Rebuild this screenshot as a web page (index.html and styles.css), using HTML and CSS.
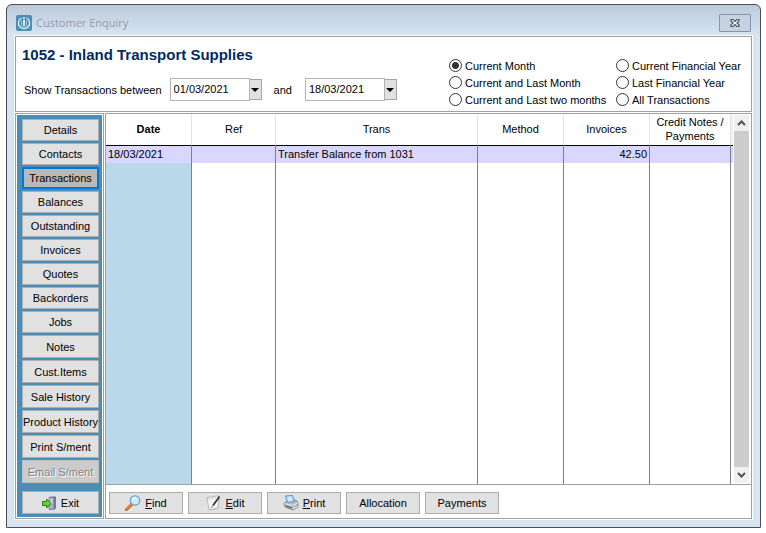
FILE: index.html
```html
<!DOCTYPE html>
<html lang="en">
  <head>
    <meta charset="UTF-8" />
    <meta name="viewport" content="width=device-width, initial-scale=1.0" />
    <title>Customer Enquiry</title>
    <link rel="stylesheet" href="styles.css">
  </head>
  <body>
    <div class="window">
      <!-- Title bar -->
      <header class="titlebar">
        <svg class="app-icon" width="16" height="16" viewBox="0 0 16 16">
          <rect width="16" height="16" rx="2" fill="#4a8db7" />
          <path d="M5.500 3a5.600 5.600 0 1 0 5 0" fill="none" stroke="#e6f1f8" stroke-width="1.300" />
          <path d="M5.500 5.500v3.700a2.500 2.500 0 0 0 5 0V5.500" fill="none" stroke="#a9cbe0" stroke-width="1" />
          <path d="M8 2.200v1.600M8 4.800v5.700" stroke="#fff" stroke-width="1.700" />
        </svg>
        <span class="title">Customer Enquiry</span>
        <button class="close" type="button" aria-label="Close">
          <svg width="12" height="10" viewBox="0 0 12 10">
            <path d="M2 1.500h2l2 2 2-2h2v1.500L8 5l2 2v1.500H8l-2-2-2 2H2V7l2-2-2-2z" fill="#fff" stroke="#4a4f5c" stroke-width="1.200" />
          </svg>
        </button>
      </header>

      <div class="client">
        <!-- Customer and date range -->
        <form class="panel filter">
          <div class="customer">
            <h1>1052 - Inland Transport Supplies</h1>
            <div class="range">
              <label for="from">Show Transactions between</label>
              <span class="date">
                <input type="text" id="from" value="01/03/2021" />
                <button type="button" aria-label="Pick start date"></button>
              </span>
              <label class="and" for="to">and</label>
              <span class="date">
                <input type="text" id="to" value="18/03/2021" />
                <button type="button" aria-label="Pick end date"></button>
              </span>
            </div>
          </div>
          <div class="periods">
            <label><input type="radio" name="period" checked />Current Month</label>
            <label><input type="radio" name="period" />Current Financial Year</label>
            <label><input type="radio" name="period" />Current and Last Month</label>
            <label><input type="radio" name="period" />Last Financial Year</label>
            <label><input type="radio" name="period" />Current and Last two months</label>
            <label><input type="radio" name="period" />All Transactions</label>
          </div>
        </form>

        <div class="lower">
          <!-- Side menu -->
          <nav class="panel side">
            <div class="menu">
              <button class="btn" type="button">Details</button>
              <button class="btn" type="button">Contacts</button>
              <button class="btn active" type="button">Transactions</button>
              <button class="btn" type="button">Balances</button>
              <button class="btn" type="button">Outstanding</button>
              <button class="btn" type="button">Invoices</button>
              <button class="btn" type="button">Quotes</button>
              <button class="btn" type="button">Backorders</button>
              <button class="btn" type="button">Jobs</button>
              <button class="btn tall" type="button">Notes</button>
              <button class="btn tall" type="button">Cust.Items</button>
              <button class="btn tall" type="button">Sale History</button>
              <button class="btn tall" type="button">Product History</button>
              <button class="btn tall" type="button">Print S/ment</button>
              <button class="btn tall" type="button" disabled>Email S/ment</button>
              <button class="btn tall exit" type="button">
                <svg width="15" height="14" viewBox="0 0 15 14">
                  <path d="M7 1.5L9 .5h5v12l-2 1H7z" fill="#7777a5" />
                  <path d="M7 1.5h5v12H7z" fill="#a9a9cc" stroke="#66668f" stroke-width=".6" />
                  <path d="M8 3h3M8 5h3M8 7h3" stroke="#dedeef" />
                  <path d="M.5 5.500h4V3l4.500 4.500L4.500 12V9.500h-4z" fill="#5fd42c" stroke="#23821a" />
                </svg>
                Exit
              </button>
            </div>
          </nav>

          <!-- Transaction list -->
          <main class="panel content">
            <div class="grid">
              <table>
                <colgroup>
                  <col class="col-date" />
                  <col class="col-ref" />
                  <col />
                  <col class="col-amount" />
                  <col class="col-amount" />
                  <col class="col-credit" />
                  <col class="col-edge" />
                </colgroup>
                <thead>
                  <tr>
                    <th class="sorted">Date</th>
                    <th>Ref</th>
                    <th>Trans</th>
                    <th>Method</th>
                    <th>Invoices</th>
                    <th>Credit Notes / Payments</th>
                    <th class="edge"></th>
                  </tr>
                </thead>
                <tbody>
                  <tr class="selected">
                    <td>18/03/2021</td>
                    <td></td>
                    <td>Transfer Balance from 1031</td>
                    <td></td>
                    <td class="num">42.50</td>
                    <td></td>
                    <td class="edge"></td>
                  </tr>
                  <tr class="blank">
                    <td></td>
                    <td></td>
                    <td></td>
                    <td></td>
                    <td></td>
                    <td></td>
                    <td class="edge"></td>
                  </tr>
                </tbody>
              </table>
              <div class="scrollbar">
                <button type="button" aria-label="Scroll up">
                  <svg width="9" height="6" viewBox="0 0 9 6"><path d="M1 5l3.500-3.500L8 5" /></svg>
                </button>
                <div class="thumb"></div>
                <button type="button" aria-label="Scroll down">
                  <svg width="9" height="6" viewBox="0 0 9 6"><path d="M1 1l3.500 3.500L8 1" /></svg>
                </button>
              </div>
            </div>

            <div class="actions">
              <button class="btn" type="button">
                <svg width="16" height="16" viewBox="0 0 16 16">
                  <path d="M1.500 14.500L7 9" stroke="#b5582a" stroke-width="3" stroke-linecap="round" />
                  <path d="M1.500 14L6.500 9" stroke="#f2914f" stroke-width="1.500" stroke-linecap="round" />
                  <circle cx="10" cy="5.500" r="4.700" fill="#c9edfb" stroke="#6e9fd8" stroke-width="1.300" />
                  <path d="M7.500 5a3 3 0 0 1 3-2.500" fill="none" stroke="#fff" stroke-width="1.500" />
                </svg>
                <span><u>F</u>ind</span>
              </button>
              <button class="btn" type="button">
                <svg width="16" height="16" viewBox="0 0 16 16">
                  <path d="M1 2.500l10-1.500 2 1-1 11-9 2z" fill="#f7f7f7" stroke="#a9a9a9" stroke-width=".8" />
                  <path d="M3.500 15l8.500-1.500L13 4" fill="none" stroke="#bdbdbd" />
                  <path d="M2.500 3.500l1.500 1M5.500 3l1.500 1M8.500 2.500l1 1" stroke="#aaa" />
                  <path d="M13.500 1.500L7 10.500" stroke="#333" stroke-width="1.800" />
                  <path d="M7 10.500l-2 2.500" stroke="#777" />
                </svg>
                <span><u>E</u>dit</span>
              </button>
              <button class="btn" type="button">
                <svg width="16" height="16" viewBox="0 0 16 16">
                  <path d="M1 8l4-2 8-1 2 3v4l-5 3-8-3z" fill="#b5b8be" stroke="#74777e" stroke-width=".8" />
                  <path d="M2.500 1l7-.5 2 6-7 1z" fill="#b9d9fa" stroke="#5a93de" stroke-width="1" />
                  <path d="M4.500 2.800l4-.3M5 4.800l4-.4" stroke="#fff" />
                  <path d="M1.500 8.500l8 2L14.500 8" fill="none" stroke="#eee" />
                  <path d="M3 11l6 2" stroke="#555" stroke-width="1.200" />
                  <path d="M10 14l4.500-2.500" stroke="#efefef" />
                </svg>
                <span><u>P</u>rint</span>
              </button>
              <button class="btn" type="button">Allocation</button>
              <button class="btn" type="button">Payments</button>
            </div>
          </main>
        </div>
      </div>
    </div>
  </body>
</html>
```

FILE: styles.css
```css
* {
  box-sizing: border-box;
}
body {
  display: flex;
  height: 100vh;
  margin: 0;
  padding: 4px 5px 5px 6px;
  background-color: #fff;
  color: #000;
  font-family: "Liberation Sans", Arial, sans-serif;
  font-size: 11px;
  line-height: 14px;
}
button,
input {
  margin: 0;
  font: inherit;
  color: inherit;
}
.window {
  display: flex;
  flex: 1;
  flex-direction: column;
  padding: 0 7px 7px;
  border: 1px solid #4b4d52;
  border-radius: 6px 6px 0 0;
  background: #d7e4f2 linear-gradient(#bccad9, #d7e4f2) no-repeat;
  background-size: 100% 30px;
}

/* title bar */
.titlebar {
  display: flex;
  align-items: center;
  height: 30px;
  padding: 6px 2px 0;
}
.title {
  flex: 1;
  margin-left: 4px;
  color: #949ba4;
  font-family: "Open Sans", "Noto Sans", sans-serif;
}
.close {
  display: flex;
  align-items: center;
  justify-content: center;
  width: 32px;
  height: 18px;
  padding: 0;
  border: 1px solid #8793b5;
  border-radius: 1px;
  background: #c6d2e2;
}

/* panels */
.client {
  display: flex;
  flex: 1;
  flex-direction: column;
  gap: 1px;
  padding: 1px;
  background-color: #fff;
}
.panel {
  border: 1px solid #a0a0a0;
  background-color: #fff;
}
.lower {
  display: flex;
  flex: 1;
  gap: 1px;
}

/* customer and date range */
.filter {
  display: flex;
  justify-content: space-between;
  height: 76px;
}
.customer {
  padding: 9px 0 0 6px;
}
h1 {
  margin: 0;
  color: #002b64;
  font-size: 15px;
  line-height: 18px;
}
.range {
  display: flex;
  align-items: center;
  margin-top: 14px;
  padding-left: 2px;
}
.date {
  display: flex;
  align-items: center;
  margin-left: 8px;
}
.date input {
  width: 80px;
  height: 23px;
  padding: 0 3px 2px;
  border: 1px solid #b4b4b4;
}
.date button {
  display: flex;
  align-items: center;
  justify-content: center;
  width: 12px;
  height: 21px;
  padding: 0;
  border: 1px solid #a5a5a5;
  border-left: 0;
  background: #e1e1e1;
}
.date button::before {
  content: "";
  border: 4px solid transparent;
  border-top-color: #000;
  border-bottom: 0;
}
.and {
  margin: 0 5px 0 12px;
}
.periods {
  display: grid;
  grid-template-columns: 167px 135px;
  grid-auto-rows: 17px;
  padding-top: 20px;
}
.periods label {
  display: flex;
  align-items: center;
  gap: 3px;
}
.periods input {
  width: 13px;
  height: 13px;
  border: 1px solid #333;
  border-radius: 50%;
  appearance: none;
}
.periods input:checked {
  background: radial-gradient(#333 3px, #fff 4px);
}

/* side menu */
.side {
  width: 89px;
  padding: 1px;
}
.menu {
  display: flex;
  flex-direction: column;
  gap: 2px;
  height: 100%;
  padding: 4px 3px 3px 5px;
  background-color: #4a8db7;
}
.btn {
  display: flex;
  flex-shrink: 0;
  align-items: center;
  justify-content: center;
  gap: 4px;
  height: 22px;
  padding: 0;
  border: 1px solid #adadad;
  background-color: #e1e1e1;
  white-space: nowrap;
}
.btn.tall {
  height: 23px;
}
.btn.active {
  border: 2px solid #0078d7;
  background-color: #b9b9b9;
}
.btn:disabled {
  border-color: #bfbfbf;
  background-color: #ccc;
  color: #838383;
  text-shadow: 1px 1px #fff;
}
.exit {
  margin-top: auto;
}

/* transaction list */
.content {
  display: flex;
  flex: 1;
  flex-direction: column;
}
.grid {
  display: flex;
  flex: 1;
  gap: 1px;
  padding-right: 2px;
  border-bottom: 1px solid #a0a0a0;
}
table {
  flex: 1;
  height: 100%;
  border-collapse: separate;
  border-spacing: 0;
  table-layout: fixed;
}
.col-date,
.col-amount {
  width: 86px;
}
.col-ref {
  width: 84px;
}
.col-credit {
  width: 81px;
}
.col-edge {
  width: 2px;
}
th {
  height: 32px;
  padding: 0 4px 2px;
  border-right: 1px solid #e3e3e3;
  border-bottom: 1px solid #000;
  font-weight: normal;
}
th.sorted {
  font-weight: bold;
}
td {
  height: 17px;
  padding: 0 2px 2px;
  border-right: 1px solid #808080;
}
.num {
  text-align: right;
}
.selected td {
  background-color: #d9d7ff;
}
.blank td {
  height: auto;
}
.blank td:first-child {
  background-color: #b9d9ea;
}
th.edge,
td.edge {
  padding: 0;
  border-right: 0;
}
th.edge {
  background-color: #f0f0f0;
}
.scrollbar {
  display: flex;
  flex-direction: column;
  width: 15px;
  margin: 1px 0;
  background-color: #f0f0f0;
}
.scrollbar button {
  height: 16px;
  padding: 0;
  border: 0;
  background: none;
  line-height: 0;
}
.scrollbar path {
  fill: none;
  stroke: #505050;
  stroke-width: 2;
}
.thumb {
  flex: 1;
  background-color: #cdcdcd;
}
.actions {
  display: flex;
  gap: 5px;
  padding: 7px 3px 4px;
}
.actions .btn {
  width: 74px;
}
```
